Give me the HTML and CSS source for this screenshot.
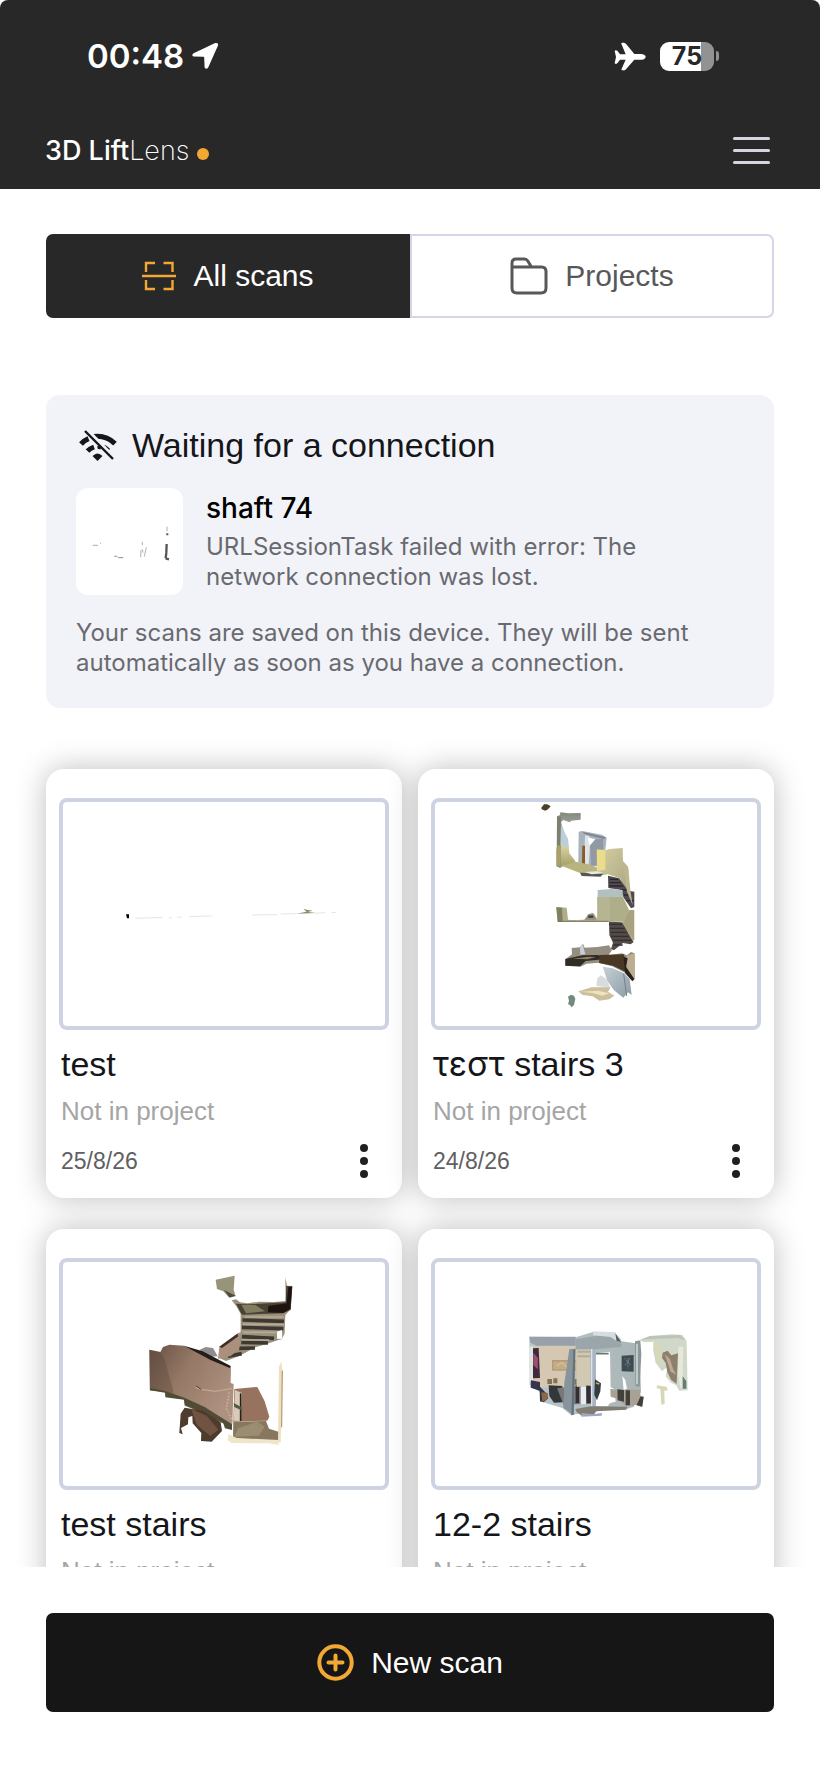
FILE: index.html
```html
<!DOCTYPE html>
<html lang="en">
<head>
<meta charset="utf-8">
<meta name="viewport" content="width=device-width, initial-scale=1">
<title>3D LiftLens</title>
<link rel="stylesheet" href="styles.css">
</head>
<body>
<header class="header">
  <div class="status">
    <div class="status-left">
      <span class="clock">00:48</span>
      <svg class="location" width="28" height="28" viewBox="0 0 28 28" aria-hidden="true"><path d="M2.600 11.200 24.200 1Q27.800.4 27 3.600L17.200 25.400Q15.400 28 13.600 25.400L13.200 15.600Q13.200 14.800 12.400 14.800L2.600 14.600Q0 13.200 2.600 11.200Z" fill="#fff"/></svg>
    </div>
    <div class="status-right">
      <svg width="32" height="29" viewBox="0 0 96 87" aria-hidden="true"><path d="M2 26Q5 23 10 26L18 37H35L22 5Q21 2 25 2H30Q34 3 37 7L61 36H83Q94 38 95 44Q94 52 83 53H61L36 82Q33 86 28 85H24Q21 84 23 80L35 53H18L10 64Q5 67 2 64L6 45Z" fill="#fff"/></svg>
      <div class="battery"><span class="battery-level">75</span><span class="battery-nub"></span></div>
    </div>
  </div>
  <div class="nav">
    <div class="logo"><span><b>3D Lift</b><span class="logo-thin">Lens</span></span><span class="logo-dot"></span></div>
    <button class="menu" type="button" aria-label="Menu"><span></span><span></span><span></span></button>
  </div>
</header>

<main class="content">
  <div class="tabs" role="tablist">
    <button class="tab tab-active" type="button" role="tab" aria-selected="true">
      <svg width="34" height="30" viewBox="0 0 34 30" fill="none" stroke="#f3a833" stroke-width="2.400" aria-hidden="true"><path d="M0 15H34M4 11V2H13M21.500 2H30.500V11M4 19V28H13M21.500 28H30.500V19"/></svg>
      All scans
    </button>
    <button class="tab" type="button" role="tab" aria-selected="false">
      <svg width="38" height="38" viewBox="0 0 38 38" fill="none" stroke="#58585a" stroke-width="3" stroke-linejoin="round" aria-hidden="true"><path d="M2 11V6Q2 2 6 2H14.500Q16.500 2 17.800 4L21.500 10H31.500Q36 10 36 14.500V31Q36 36 31 36H7Q2 36 2 31V10H21.500"/></svg>
      Projects
    </button>
  </div>

  <section class="banner">
    <h2 class="banner-title">
      <svg width="38" height="31" viewBox="0 0 38 31" aria-hidden="true">
        <g fill="none" stroke="#15161a" stroke-width="5"><path d="M2 14Q5 10.500 9.500 8.600M14.500 6.600Q27 5 36 13.600M8.500 21Q11 18.400 15 17"/><path d="M18.500 17.600Q20 17.200 22 18M25 16Q28 17.500 30 20" stroke-width="3"/></g>
        <path d="M13.500 26Q18.500 21 23.500 26L18.500 31Z" fill="#15161a"/>
        <path d="M7.500 0 35 28" stroke="#f2f3f8" stroke-width="4.600"/><path d="M6 1 34 29" stroke="#15161a" stroke-width="2.400"/>
      </svg>
      Waiting for a connection
    </h2>
    <div class="pending">
      <svg class="pending-thumb" viewBox="0 0 107 107" aria-hidden="true">
        <g transform="translate(-36 -98) scale(.3333)" stroke="#555" fill="none" stroke-width="2"><path d="M158 466H174M180 460H183" stroke="#888"/><path d="M223 499H232M234 503H250"/><path d="M307 455V466M303 480 302 502M319 472 313 500M307 478 309 488M381 410V424" stroke="#888"/><path d="M382 430V436" stroke-width="6"/><path d="M380 462 379 488 377 505M377 505 387 508" stroke-width="7"/></g>
      </svg>
      <div class="pending-text">
        <h3 class="pending-name">shaft 74</h3>
        <p class="note">URLSessionTask failed with error: The<br>network connection was lost.</p>
      </div>
    </div>
    <p class="note">Your scans are saved on this device. They will be sent automatically as soon as you have a connection.</p>
  </section>

  <section class="grid" aria-label="Scans">
    <article class="card">
      <div class="thumb"><svg viewBox="0 0 322 224" aria-hidden="true">
        <g transform="translate(-23 -42) scale(.3333)"><path d="M258 463H267V475H261Z" fill="#000"/><path d="M286 475 368 472M386 474 396 473M412 472 425 471M448 470 515 468M636 465 712 464M722 462 770 461M825 460 855 458M875 458 888 457" stroke="#d8d8d4" stroke-width="2"/><path d="M770 461 800 455 790 446 803 450 818 452 803 456 828 459Z" fill="#8b866a"/></g>
      </svg></div>
      <h3 class="card-title">test</h3>
      <p class="card-project">Not in project</p>
      <div class="card-foot"><time datetime="2026-08-25">25/8/26</time><button class="more" type="button" aria-label="More options for test"><span></span><span></span><span></span></button></div>
    </article>

    <article class="card">
      <div class="thumb"><svg viewBox="0 0 322 224" aria-hidden="true">
        <defs>
          <linearGradient id="wall" x2="0" y2="1"><stop offset="0" stop-color="#85887a"/><stop offset=".45" stop-color="#b4c0c2"/><stop offset=".6" stop-color="#d8d3a0"/><stop offset="1" stop-color="#a39c66"/></linearGradient>
          <linearGradient id="cream" x2="1" y2="1"><stop offset="0" stop-color="#d6cfa0"/><stop offset="1" stop-color="#aaa682"/></linearGradient>
          <linearGradient id="pale" x2="1" y2="1"><stop offset="0" stop-color="#c6d0d6"/><stop offset="1" stop-color="#8b9aa3"/></linearGradient>
        </defs>
        <g transform="translate(95 -7) scale(.3333)">
          <path d="M34 38 42 28 52 28 62 34 54 43 46 47 35 43Z" fill="#494026"/>
          <path d="M81 64 90 60 91 52 115 55 152 54 152 74 124 77 119 82 100 75 93 82 103 112 114 133 118 175 136 198 137 208 104 211 91 218 80 214 78 168 82 145Z" fill="url(#wall)"/>
          <path d="M81 64 93 66 91 218 80 214Z" fill="#7d806f"/>
          <path d="M93 90 114 133 116 160 92 150Z" fill="#bccfd8"/>
          <path d="M82 150 90 153V214H80Z" fill="#aba06a"/>
          <path d="M146 110 157 108 216 119 230 128 226 165 220 212 166 216 145 202Z" fill="#a7b3bd"/>
          <path d="M157 110 228 127 222 132 173 120 165 118Z" fill="#7f868e"/>
          <path d="M165 120 178 124 180 150 176 212 157 207 163 182Z" fill="#dce4ea"/>
          <path d="M157 152H165V207H156Z" fill="#8c5920"/>
          <path d="M180 135 220 131 218 210 183 212Z" fill="#9299a3"/>
          <path d="M173 127 196 133 179 152Z" fill="#fff"/>
          <path d="M96 213 138 200 175 208 220 225 232 238 200 243 152 235Z" fill="#b9b380"/>
          <path d="M150 233 220 235 212 245 155 243Z" fill="#55584f"/><path d="M163 231 212 228 224 235 185 238Z" fill="#e8e9e5"/>
          <path d="M200 163 228 165 238 162 278 159 279 198 294 215 299 285 286 283 270 250 232 237 201 228Z" fill="url(#cream)"/>
          <path d="M201 165H226V224L201 228Z" fill="#eadc8a"/>
          <path d="M234 242 268 250 294 287 313 290V336L303 340 282 310 270 284 235 279Z" fill="#514b50"/>
          <path d="M240 253H264M238 263H273M237 273H280M270 285H292M282 300H302M289 317H311" stroke="#282830" stroke-width="4"/>
          <path d="M279 210 295 220 301 285 308 330 291 290Z" fill="#bdb68e"/>
          <path d="M203 285 245 282 278 285V306H203Z" fill="#b2c0bf"/>
          <path d="M202 306H279L297 345 313 345V435L300 440 278 380H83L79 336 110 338 114 374 145 376 173 361 191 355 202 372Z" fill="#aeae89"/>
          <path d="M79 337 96 338 98 380H83Z" fill="#817f5e"/><path d="M115 334H202V356L190 354 174 361 162 374H117Z" fill="#fff"/>
          <path d="M202 306H240V378H202Z" fill="#b6b591"/>
          <path d="M166 374 174 358 188 354 199 374Z" fill="#918e82"/><path d="M175 365H190" stroke="#393d40" stroke-width="7"/>
          <path d="M84 379H236" stroke="#77735a" stroke-width="3"/>
          <path d="M237 380 277 382 303 430 311 441 302 448 279 444 252 466 243 462 249 443 238 420Z" fill="#554b46"/>
          <path d="M238 388H276M240 400H284M243 412H290M243 424H297M250 436H304M250 450H278" stroke="#302f35" stroke-width="4"/>
          <path d="M279 386 300 346H312V434Z" fill="#a9a17f"/>
          <path d="M125 459 150 457 159 446 164 458 202 456 237 451 246 466 235 481 276 475 291 481 303 471 314 475V552L308 558 288 535 247 514 206 503 170 506 151 515 106 512 106 493 126 478Z" fill="#958d7f"/>
          <path d="M150 458 158 447 166 478 151 479Z" fill="#c8d1d9"/>
          <path d="M106 492 158 481 204 480 235 491 167 498 150 514 106 512Z" fill="#302b23"/>
          <path d="M128 491 174 485 198 486 173 493Z" fill="#8c8064"/>
          <path d="M209 480 282 478 288 531 249 512 207 504Z" fill="#493824"/>
          <path d="M290 482 313 475V553L301 551 290 525Z" fill="#bbae91"/>
          <path d="M281 485 293 490 288 515 313 552 307 559 285 534Z" fill="#2c211a"/>
          <path d="M218 515 248 520 283 535 299 553 305 600 294 592 280 608 252 586 232 558Z" fill="url(#pale)"/>
          <path d="M281 537 290 603" stroke="#718087" stroke-width="3"/>
          <path d="M199 573 202 550 213 541 231 554 240 578Z" fill="#d9dcdf"/>
          <path d="M145 589 185 577 242 577 234 590 253 602 238 613 208 617 188 604 158 600Z" fill="#cbbf9d"/><path d="M151 590 204 587 239 595 217 602 188 594Z" fill="#efe2bd"/>
          <path d="M123 599 132 602 136 611 132 630 125 637 119 629 114 628 117 617 114 605Z" fill="#738b7e"/>
        </g>
      </svg></div>
      <h3 class="card-title"><span class="greek" lang="el">τεστ</span> stairs 3</h3>
      <p class="card-project">Not in project</p>
      <div class="card-foot"><time datetime="2026-08-24">24/8/26</time><button class="more" type="button" aria-label="More options for τεστ stairs 3"><span></span><span></span><span></span></button></div>
    </article>

    <article class="card">
      <div class="thumb"><svg viewBox="0 0 322 224" aria-hidden="true">
        <defs><linearGradient id="panel" x2="1" y2=".6"><stop offset="0" stop-color="#655043"/><stop offset=".45" stop-color="#957865"/><stop offset="1" stop-color="#ae9180"/></linearGradient></defs>
        <g transform="translate(67 -12) scale(.3333)">
          <path d="M257 89 314 77 311 119 317 139 296 141 280 124 261 117Z" fill="#97947b"/><path d="M282 120 317 137 299 143Z" fill="#4f4c38"/>
          <path d="M305 151 318 148 330 157 352 160 388 155 432 156 467 153 466 82 471 107 487 108 482 178 466 195 464 250 456 268 445 270 410 282 376 292 328 318 288 333 268 324 319 300 332 244 332 192 319 169Z" fill="#9a907b"/>
          <path d="M318 161 352 163 414 160 467 157 469 108 487 109 482 179 459 190 336 194Z" fill="#494132"/>
          <path d="M415 168 470 160 475 112 486 110 481 176 460 189 414 187Z" fill="#1d1410"/>
          <path d="M334 164 376 165 405 184 348 190Z" fill="#817d61"/>
          <path d="M337 210 462 214M336 232 460 236M336 260 432 265M334 277 414 279M327 295 375 294M294 319 335 311" stroke="#3e3832" stroke-width="11"/>
          <path d="M345 201H462M339 223H462M338 247H448M335 270H418" stroke="#b7ab94" stroke-width="5"/>
          <path d="M441 245 456 240 457 267 441 266Z" fill="#fff"/>
          <path d="M268 290 323 250 332 247 328 298 302 318 264 326Z" fill="#ad8f7e"/><path d="M268 290 322 251 325 259 276 294Z" fill="#3d302a"/>
          <path d="M208 300 227 291 249 294 263 319 240 320Z" fill="#8f8d8d"/>
          <path d="M58 299 91 306 99 291 118 284 162 287 303 349 302 399 311 402 307 524 282 522 222 490 164 467 161 447 126 443 106 425 60 421Z" fill="url(#panel)"/>
          <path d="M58 299 91 306 104 328 132 430 108 426 59 420Z" fill="#594439" opacity=".35"/>
          <path d="M162 287 218 304 302 348 299 354 242 330Z" fill="#231e19"/>
          <path d="M60 414 106 423 165 444 224 471 306 523V540L285 535 280 520 219 489 165 466 162 449 106 442 105 428 60 421Z" fill="#504c36"/>
          <path d="M197 412 212 418 256 424 306 415" stroke="#c2a990" stroke-width="4" fill="none"/><path d="M199 408 214 419" stroke="#4b382d" stroke-width="3"/>
          <path d="M298 427 289 477 308 516" fill="none" stroke="#c5b391" stroke-width="5" stroke-dasharray="5 5"/>
          <path d="M152 491 164 473 219 482 272 517 276 543 245 575 213 573 214 549 188 520 187 498 175 502 174 523 153 534 158 553 148 549Z" fill="#4f3b2e"/>
          <path d="M184 478 230 497 265 539 241 558 201 525Z" fill="#705441"/>
          <path d="M313 417 382 411 404 454 418 500 412 512 352 514 310 515Z" fill="#97735f"/><path d="M315 420 336 429 333 513 311 512Z" fill="#d9cbb9"/><path d="M332 430V513" stroke="#292119" stroke-width="5"/>
          <path d="M310 515 408 513 417 536 450 547 448 574 414 574 309 564Z" fill="#86775e"/><path d="M324 535 382 515 404 530 387 557 313 560Z" fill="#9b8d71"/>
          <path d="M311 459 335 472 337 482 313 471Z" fill="#515c3d"/>
          <path d="M447 350 454 335 457 360 455 471 452 577H444Z" fill="#eee0be"/><path d="M457 362 455 532" stroke="#a78754" stroke-width="3"/>
          <path d="M293 570 296 552 320 564 446 570V585L415 580 304 579Z" fill="#ede6c8"/>
        </g>
      </svg></div>
      <h3 class="card-title">test stairs</h3>
      <p class="card-project">Not in project</p>
      <div class="card-foot"><time datetime="2026-08-24">24/8/26</time><button class="more" type="button" aria-label="More options for test stairs"><span></span><span></span><span></span></button></div>
    </article>

    <article class="card">
      <div class="thumb"><svg viewBox="0 0 322 224" aria-hidden="true">
        <defs><linearGradient id="room" x2="1"><stop offset="0" stop-color="#bac6ce"/><stop offset="1" stop-color="#a9b5b5"/></linearGradient></defs>
        <g transform="translate(75 48) scale(.3333)">
          <path d="M58 80 197 82 249 66 314 68 334 94 388 101 393 246 371 290 352 296 247 302 184 316 157 294 90 274 92 248 59 224Z" fill="url(#room)"/>
          <path d="M58 80 197 80V107H81L61 98Z" fill="#98a1a9"/><path d="M66 108H196V235L91 232 68 207Z" fill="#d5c7b1"/>
          <path d="M69 115 86 114 90 204 68 205Z" fill="#40293e"/><path d="M70 128 84 144 83 178 70 165Z" fill="#9c4f70"/><path d="M58 110 69 109V213H60Z" fill="#dfe6df"/>
          <path d="M126 150H207V182H126Z" fill="#b39c77"/><path d="M130 155H203V178H130Z" fill="#c3ad84"/><path d="M140 168 156 157 170 171 188 160" stroke="#d3c298" stroke-width="4" fill="none"/>
          <path d="M63 211 90 216V230L108 249 115 265 101 277 90 274 89 242 62 233Z" fill="#353649"/><path d="M94 247 114 249 113 266 97 276Z" fill="#8c6945"/>
          <path d="M112 207H126V222H112ZM130 205H142V220H130ZM193 207H216V224H193Z" fill="#817358"/><path d="M116 226 157 228 158 277 132 278 118 258Z" fill="#34373a"/>
          <path d="M141 235 233 224 245 235 243 281 161 284Z" fill="#787879"/><path d="M197 226H207V279H197ZM229 224 246 229V280H230Z" fill="#352f32"/>
          <path d="M212 229H228V283H212ZM173 234H190V262H174Z" fill="#e7edf1"/>
          <path d="M198 88 314 68 333 88 334 110 245 119 198 118Z" fill="#9aa6aa"/><path d="M249 64 315 67 334 92 324 96 302 81 249 76Z" fill="#d5dde1"/><path d="M316 70 333 95 320 94Z" fill="#505b5f"/>
          <path d="M198 119 242 118V226L200 231Z" fill="#d2c9b2"/><path d="M202 125H242M202 139H242" stroke="#b1ac9a" stroke-width="6"/>
          <path d="M178 118 196 116 191 316 160 293 163 220Z" fill="#88949c"/><path d="M190 119 196 116 191 314 184 316Z" fill="#64727b"/>
          <path d="M241 117H257L258 304H243Z" fill="#a7b5c2"/><path d="M245 117V300" stroke="#dae4eb" stroke-width="4"/>
          <path d="M258 130 300 125 302 231 313 238 317 275 300 279 293 289 258 289Z" fill="#fff"/><path d="M258 131H296" stroke="#65796e" stroke-width="5"/>
          <path d="M255 208 273 220 271 244 261 271 253 254Z" fill="#333c42"/><path d="M258 219 268 222" stroke="#d0a64f" stroke-width="5"/>
          <path d="M196 297 244 289 352 290 349 299 259 304 249 317 215 317 200 306Z" fill="#817d72"/><path d="M215 309 249 313 276 309 275 317 214 320Z" fill="#a0a5c4"/>
          <path d="M301 236 318 239 339 266 344 238 390 240 391 256 401 261 395 291 376 285 351 289 317 265 302 260Z" fill="#a9a294"/><path d="M322 238 342 240V275L323 271ZM347 241H360V286H347ZM391 260H401L397 290 380 285Z" fill="#41403b"/>
          <path d="M335 137 371 135V185L335 184Z" fill="#3d4c51"/><path d="M344 145 362 165M360 145 344 168M354 145V175" stroke="#7c8f96" stroke-width="3" stroke-dasharray="4 3"/>
          <path d="M375 94 391 91 394 132 389 230 376 228Z" fill="#899798"/><path d="M381 101V223" stroke="#cbd6d4" stroke-width="5"/>
          <path d="M337 198 346 210 351 236 341 240Z" fill="#fff"/>
          <path d="M387 91 419 78 487 73 517 75 530 94 533 241 508 242 498 226 483 218 467 199 472 171 456 184 437 158 429 118 433 95 404 97Z" fill="#d2d8c9"/>
          <path d="M391 89 421 78 510 75 528 91 502 84 447 86Z" fill="#bac4b8"/><path d="M429 96 457 113 455 167 440 157Z" fill="#d5d9b9"/>
          <path d="M458 128 473 122 484 136 504 130 500 222 483 209 472 186 467 159 456 143Z" fill="#8d7e6d"/><path d="M464 132 480 147 489 176 499 194 482 185 475 164Z" fill="#bca98f"/>
          <path d="M505 110H520L518 195 529 210 526 239 511 233 504 193Z" fill="#e4e9d9"/><path d="M518 198 529 213V236H518Z" fill="#627d78"/>
          <path d="M441 226 469 230 474 241 463 242 464 282 454 284 451 237 440 235Z" fill="#d8d7b5"/>
        </g>
      </svg></div>
      <h3 class="card-title">12-2 stairs</h3>
      <p class="card-project">Not in project</p>
      <div class="card-foot"><time datetime="2026-08-24">24/8/26</time><button class="more" type="button" aria-label="More options for 12-2 stairs"><span></span><span></span><span></span></button></div>
    </article>
  </section>
</main>

<footer class="footer">
  <button class="new-scan" type="button">
    <svg width="37" height="37" viewBox="0 0 37 37" fill="none" stroke="#f3a833" stroke-width="4" aria-hidden="true"><circle cx="18.500" cy="18.500" r="16.200"/><path d="M18.500 11.500V25.500M11.500 18.500H25.500" stroke-linecap="round"/></svg>
    New scan
  </button>
</footer>
</body>
</html>
```

FILE: styles.css
```css
* { box-sizing: border-box; }
body {
  margin: 0;
  height: 100vh;
  display: flex;
  flex-direction: column;
  background: #fff;
  color: #15161a;
  font-family: "Liberation Sans", Arial, sans-serif;
}
h2, h3, p { margin: 0; font-weight: 400; }
button { font: inherit; color: inherit; border: 0; padding: 0; margin: 0; background: none; cursor: pointer; }
svg { display: block; flex: none; }

/* Header */
.header {
  flex: none;
  background: #282828;
  border-radius: 8px 8px 0 0;
  color: #fff;
}
.status {
  display: flex;
  justify-content: space-between;
  align-items: center;
  height: 112px;
  padding: 0 101px 0 87px;
}
.status-left { display: flex; align-items: center; gap: 7px; }
.status-right { display: flex; align-items: center; gap: 14px; }
.clock { font: 600 33px/40px Inter, sans-serif; }
.battery { display: flex; align-items: center; gap: 2px; }
.battery-level {
  width: 54px;
  height: 29px;
  border-radius: 9px;
  background: linear-gradient(90deg, #fff 41px, #929292 41px);
  color: #282828;
  font: 700 25px/29px Inter, sans-serif;
  text-align: center;
}
.battery-nub { width: 3px; height: 10px; border-radius: 0 3px 3px 0; background: #929292; }
.nav {
  display: flex;
  justify-content: space-between;
  align-items: center;
  height: 77px;
  padding: 0 50px 0 45px;
}
.logo { display: flex; align-items: baseline; gap: 8px; font: 500 27px/36px Inter, sans-serif; }
.logo b { font-weight: 500; }
.logo-thin { font-weight: 200; }
.logo-dot { width: 12px; height: 12px; border-radius: 50%; background: #f3a833; }
.menu { width: 37px; display: grid; gap: 9px; }
.menu span { height: 3px; border-radius: 2px; background: #d3d6e1; }

/* Scrolling content */
.content {
  flex: 1;
  min-height: 0;
  overflow-y: auto;
  scrollbar-width: none;
  padding: 45px 46px 40px;
}
.tabs { display: grid; grid-template-columns: 1fr 1fr; height: 84px; }
.tab {
  display: flex;
  align-items: center;
  justify-content: center;
  gap: 17px;
  border: 2px solid #d3d6e6;
  border-radius: 0 7px 7px 0;
  color: #58585a;
  font-size: 30px;
}
.tab-active {
  background: #282828;
  border-color: #282828;
  border-radius: 7px 0 0 7px;
  color: #fff;
}

/* Connection banner */
.banner {
  margin-top: 77px;
  padding: 30px 30px 30px;
  border-radius: 14px;
  background: #f2f3f8;
}
.banner-title {
  display: flex;
  align-items: center;
  gap: 15px;
  padding-left: 3px;
  font-size: 34px;
  line-height: 40px;
}
.pending { display: flex; gap: 23px; margin: 23px 0; }
.pending-thumb { width: 107px; height: 107px; border-radius: 12px; background: #fff; }
.pending-name { margin-bottom: 4px; font: 500 28px/40px Inter, sans-serif; color: #000; }
.note { font: 400 24px/30px Inter, sans-serif; color: #696a6f; }

/* Scan cards */
.grid {
  display: grid;
  grid-template-columns: 1fr 1fr;
  gap: 31px 16px;
  margin-top: 61px;
}
.card {
  padding: 29px 13px 18px;
  border-radius: 18px;
  background: #fff;
  box-shadow: 0 0 30px rgba(0, 0, 0, .26);
}
.thumb {
  border: 4px solid #ced3e3;
  border-radius: 8px;
  background: #fff;
}
.thumb svg { width: 100%; }
.card-title { padding: 14px 2px 0; font-size: 34px; line-height: 40px; }
.greek { font-family: Inter, "Liberation Sans", sans-serif; line-height: 1; }
.card-project { padding: 11px 2px 0; font-size: 26px; line-height: 32px; color: #a5a5a5; }
.card-foot {
  display: flex;
  align-items: center;
  justify-content: space-between;
  padding: 15px 21px 0 2px;
  font-size: 23px;
  line-height: 38px;
  color: #606062;
}
.more { display: grid; gap: 5px; }
.more span { width: 8px; height: 8px; border-radius: 50%; background: #202022; }

/* Bottom action */
.footer { flex: none; padding: 46px 46px 65px; }
.new-scan {
  display: flex;
  align-items: center;
  justify-content: center;
  gap: 17px;
  width: 100%;
  height: 99px;
  border-radius: 7px;
  background: #161616;
  color: #fff;
  font-size: 30px;
}
```
